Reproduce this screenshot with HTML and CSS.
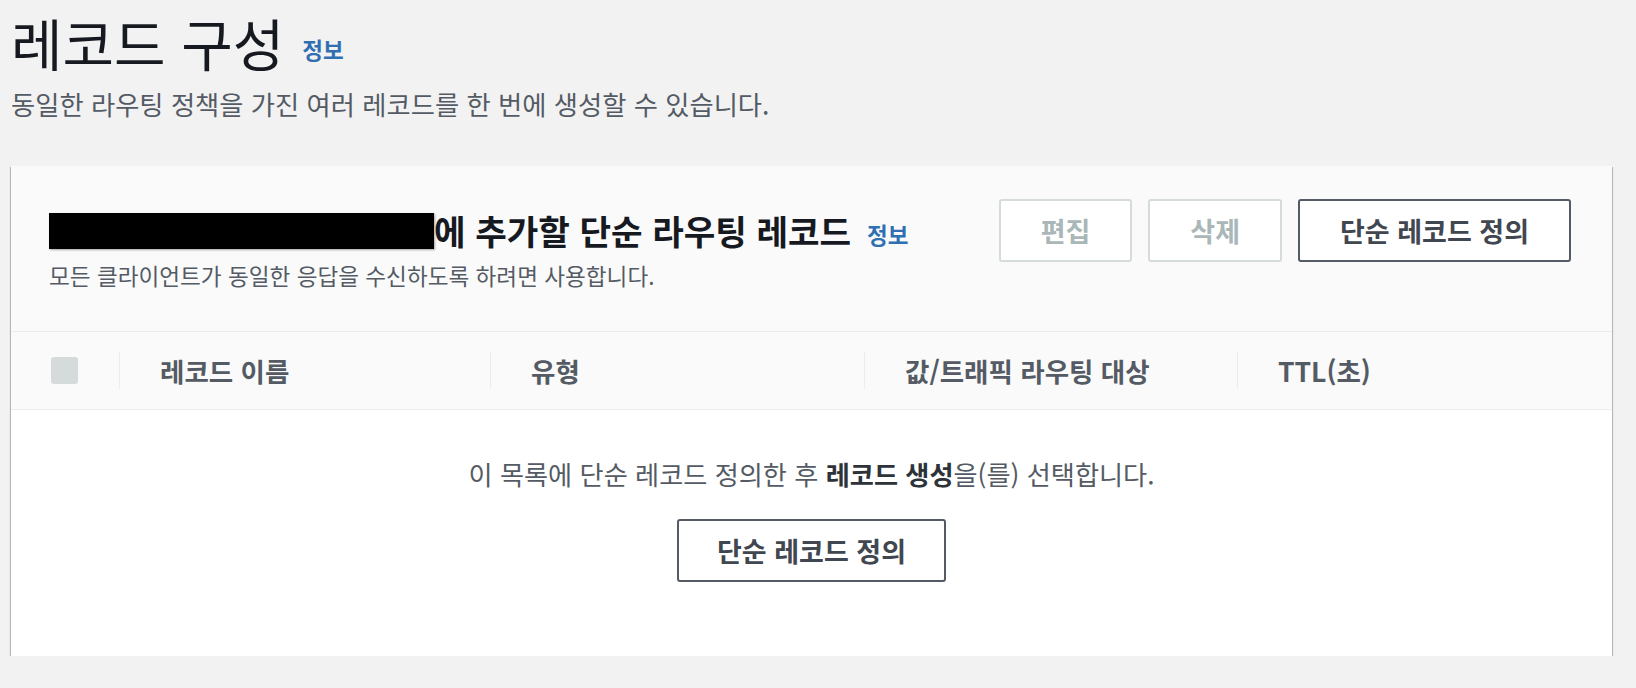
FILE: index.html
```html
<!DOCTYPE html>
<html lang="ko">
<head>
  <meta charset="UTF-8">
  <meta name="viewport" content="width=device-width, initial-scale=1.0">
  <title>레코드 구성</title>
  <link rel="stylesheet" href="styles.css">
</head>
<body>
  <div class="page">
    <div class="page-head">
      <h1>레코드 구성<a href="#" class="info info-lg">정보</a></h1>
      <p class="desc">동일한 라우팅 정책을 가진 여러 레코드를 한 번에 생성할 수 있습니다.</p>
    </div>

    <div class="card">
      <div class="card-head">
        <div class="card-title">
          <h2><span class="redacted"></span>에 추가할 단순 라우팅 레코드<a href="#" class="info">정보</a></h2>
          <p class="sub">모든 클라이언트가 동일한 응답을 수신하도록 하려면 사용합니다.</p>
        </div>
        <div class="actions">
          <button class="btn" disabled>편집</button>
          <button class="btn" disabled>삭제</button>
          <button class="btn">단순 레코드 정의</button>
        </div>
      </div>

      <div class="thead">
        <div class="cell-check"><span class="checkbox"></span></div>
        <div class="th">레코드 이름</div>
        <div class="th">유형</div>
        <div class="th">값/트래픽 라우팅 대상</div>
        <div class="th">TTL(초)</div>
      </div>

      <div class="empty">
        <p>이 목록에 단순 레코드 정의한 후 <b>레코드 생성</b>을(를) 선택합니다.</p>
        <button class="btn">단순 레코드 정의</button>
      </div>
    </div>
  </div>
</body>
</html>
```

FILE: styles.css
```css
body {
  margin: 0;
  background: #f2f2f3;
  color: #16191f;
  font-family: "Noto Sans CJK KR", "Noto Sans", sans-serif;
}
.page {
  padding: 8px 24px 0 11px;
}
h1 {
  margin: 0;
  display: flex;
  align-items: center;
  height: 68px;
  font-size: 56px;
  font-weight: 400;
  line-height: 68px;
  color: #16191f;
}
.info {
  color: #2f6fb2;
  font-weight: 700;
  font-size: 22.5px;
  line-height: 30px;
  text-decoration: none;
}
.info-lg {
  margin: 14px 0 0 18px;
}
.desc {
  margin: 10px 0 0 0;
  font-size: 26.3px;
  line-height: 36px;
  color: #545b64;
}
.card {
  margin-top: 44px;
  background: #fff;
  box-shadow: 0 1px 1px 0 rgba(0, 28, 36, 0.5), 0 2px 1px 0 rgba(0, 28, 36, 0.3), 1px 1px 1px 0 rgba(0, 28, 36, 0.15), -1px 1px 1px 0 rgba(0, 28, 36, 0.15);
}
.card-head {
  display: flex;
  justify-content: space-between;
  align-items: flex-start;
  padding: 33px 41px 40px 38px;
  background: #fafafa;
  border-bottom: 1px solid #eaeded;
}
h2 {
  margin: 0;
  display: flex;
  align-items: center;
  height: 63px;
  font-size: 34.3px;
  font-weight: 700;
  line-height: 63px;
}
h2 .info {
  margin: 6px 0 0 16px;
}
.redacted {
  width: 385px;
  height: 36px;
  background: #000;
  box-shadow: 1px 1px 2px rgba(0, 0, 0, 0.35);
}
.sub {
  margin: -1px 0 0 0;
  font-size: 22.6px;
  line-height: 30px;
  color: #545b64;
}
.actions {
  display: flex;
  gap: 16px;
}
.btn {
  height: 63px;
  padding: 0 40px;
  background: #fff;
  border: 2px solid #545b64;
  border-radius: 3px;
  color: #414750;
  font-family: inherit;
  font-size: 27px;
  font-weight: 700;
  cursor: pointer;
}
.btn:disabled {
  border-color: #d5dbdb;
  color: #aab7b8;
  cursor: default;
}
.thead {
  display: grid;
  grid-template-columns: 108px 371px 374px 373px 1fr;
  align-items: center;
  height: 77px;
  background: #fafafa;
  border-bottom: 1px solid #eaeded;
}
.cell-check {
  padding-left: 40px;
  display: flex;
  align-items: center;
}
.checkbox {
  width: 27px;
  height: 27px;
  border-radius: 3px;
  background: #d5dbdb;
}
.th {
  display: flex;
  align-items: center;
  height: 37px;
  padding-left: 40px;
  border-left: 1px solid #eaeded;
  font-size: 26.5px;
  font-weight: 700;
  color: #545b64;
}
.empty {
  display: flex;
  flex-direction: column;
  align-items: center;
  padding: 46px 0 74px;
}
.empty p {
  margin: 0 0 27px;
  font-size: 26.2px;
  line-height: 36px;
  color: #545b64;
}
.empty b {
  color: #2e333a;
}
.empty .btn {
  width: 269px;
  padding: 0;
}
```
